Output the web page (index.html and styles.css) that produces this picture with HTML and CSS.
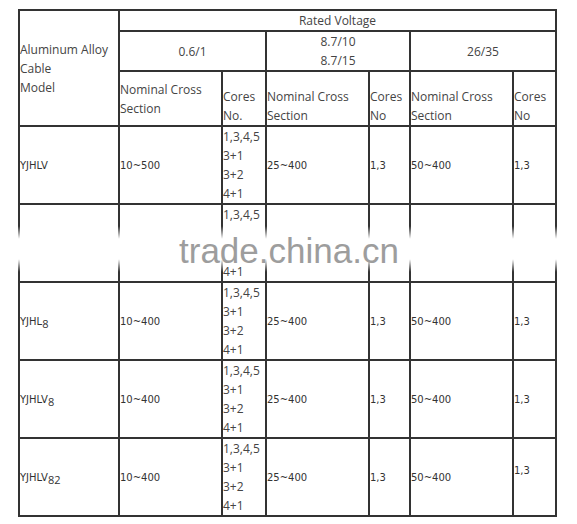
FILE: index.html
```html
<!DOCTYPE html>
<html>
<head>
<meta charset="utf-8">
<link rel="stylesheet" href="styles.css">
</head>
<body>
<div class="page">
  <div class="spec">
    <div class="cell rows3">Aluminum Alloy<br>Cable<br>Model</div>
    <div class="cell span6 center">Rated Voltage</div>
    <div class="cell span2 center">0.6/1</div>
    <div class="cell span2 center">8.7/10<br>8.7/15</div>
    <div class="cell span2 center">26/35</div>

    <div class="cell">Nominal Cross<br>Section</div>
    <div class="cell bottom">Cores<br>No.</div>
    <div class="cell bottom">Nominal Cross<br>Section</div>
    <div class="cell bottom">Cores<br>No</div>
    <div class="cell bottom">Nominal Cross<br>Section</div>
    <div class="cell bottom">Cores<br>No</div>

    <div class="cell data">YJHLV</div>
    <div class="cell data">10~500</div>
    <div class="cell">1,3,4,5<br>3+1<br>3+2<br>4+1</div>
    <div class="cell data">25~400</div>
    <div class="cell data">1,3</div>
    <div class="cell data">50~400</div>
    <div class="cell data">1,3</div>

    <div class="cell data"></div>
    <div class="cell data"></div>
    <div class="cell">1,3,4,5<br>&nbsp;<br>&nbsp;<br>4+1</div>
    <div class="cell data"></div>
    <div class="cell data"></div>
    <div class="cell data"></div>
    <div class="cell data"></div>

    <div class="cell data"><span>YJHL<sub>8</sub></span></div>
    <div class="cell data">10~400</div>
    <div class="cell">1,3,4,5<br>3+1<br>3+2<br>4+1</div>
    <div class="cell data">25~400</div>
    <div class="cell data">1,3</div>
    <div class="cell data">50~400</div>
    <div class="cell data">1,3</div>

    <div class="cell data"><span>YJHLV<sub>8</sub></span></div>
    <div class="cell data">10~400</div>
    <div class="cell">1,3,4,5<br>3+1<br>3+2<br>4+1</div>
    <div class="cell data">25~400</div>
    <div class="cell data">1,3</div>
    <div class="cell data">50~400</div>
    <div class="cell data">1,3</div>

    <div class="cell data"><span>YJHLV<sub>82</sub></span></div>
    <div class="cell data">10~400</div>
    <div class="cell">1,3,4,5<br>3+1<br>3+2<br>4+1</div>
    <div class="cell data">25~400</div>
    <div class="cell data">1,3</div>
    <div class="cell data">50~400</div>
    <div class="cell data raised">1,3</div>
  </div>

  <div class="spot" style="left:13px"></div>
  <div class="spot" style="left:113px"></div>
  <div class="spot" style="left:216px"></div>
  <div class="spot" style="left:260px"></div>
  <div class="spot" style="left:363px"></div>
  <div class="spot" style="left:404px"></div>
  <div class="spot" style="left:507px"></div>
  <div class="spot" style="left:550px"></div>
  <div class="watermark">trade.china.cn</div>
</div>
</body>
</html>
```

FILE: styles.css
```css
html, body {
  margin: 0;
  padding: 0;
  background: #ffffff;
}

.page {
  position: relative;
  width: 577px;
  height: 524px;
  padding: 9px 0 0 18px;
  box-sizing: border-box;
  overflow: hidden;
}

.spec {
  display: grid;
  grid-template-columns: 100px 103px 44px 103px 41px 103px 43px;
  grid-template-rows: 21px 40px 55px repeat(5, 78px);
  width: 539px;
  box-sizing: border-box;
  border-left: 2px solid #333333;
  border-top: 2px solid #333333;
  font-family: "Open Sans", "DejaVu Sans", sans-serif;
  font-size: 12px;
  line-height: 19px;
  color: #444444;
}

.cell {
  border-right: 2px solid #333333;
  border-bottom: 2px solid #333333;
  display: flex;
  flex-direction: column;
  justify-content: center;
  align-items: flex-start;
  white-space: nowrap;
  overflow: hidden;
}

.rows3 {
  grid-row: span 3;
}

.span2 {
  grid-column: span 2;
}

.span6 {
  grid-column: span 6;
}

.center {
  align-items: center;
  text-align: center;
}

.bottom {
  justify-content: flex-end;
}

.data {
  font-family: "DejaVu Sans", sans-serif;
  font-size: 10px;
  color: #333333;
}

.data sub {
  font-family: "Open Sans", sans-serif;
  font-size: 11px;
  line-height: 0;
  vertical-align: -3px;
}

.raised {
  padding-bottom: 14px;
}

.spot {
  position: absolute;
  top: 226px;
  width: 12px;
  height: 46px;
  background: radial-gradient(ellipse closest-side at center, #ffffff 45%, rgba(255, 255, 255, 0) 100%);
}

.watermark {
  position: absolute;
  left: 179px;
  top: 233px;
  font-family: "Liberation Sans", Arial, sans-serif;
  font-size: 35px;
  line-height: 35px;
  color: #9d9d9d;
  white-space: nowrap;
}
```
